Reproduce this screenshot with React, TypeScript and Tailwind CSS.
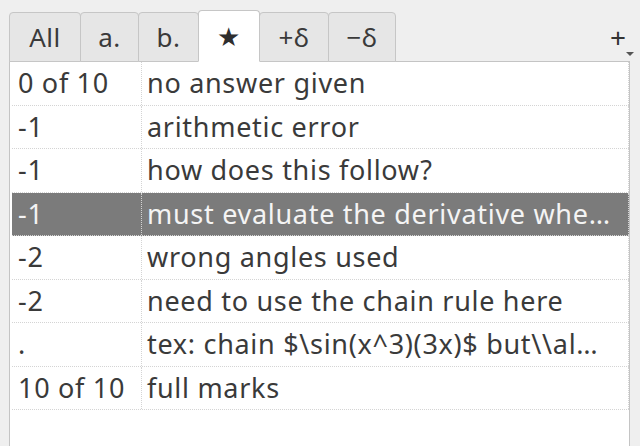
const TABS = ['All', 'a.', 'b.', '★', '+δ', '−δ'];
const TAB_W = ['w-[72px]', 'w-[59px]', 'w-[61px]', 'w-[62px]', 'w-[70px]', 'w-[68px]'];

// texts already clipped the way the list view shows them
const ROWS: Array<[string, string]> = [
  ['0 of 10', 'no answer given'],
  ['-1', 'arithmetic error'],
  ['-1', 'how does this follow?'],
  ['-1', 'must evaluate the derivative whe…'],
  ['-2', 'wrong angles used'],
  ['-2', 'need to use the chain rule here'],
  ['.', 'tex: chain $\\sin(x^3)(3x)$ but\\\\al…'],
  ['10 of 10', 'full marks'],
];

const SELECTED = 3;

export default function App() {
  return (
    <div
      className="w-[640px] h-[446px] overflow-hidden bg-[#efefef] text-[#3a3a3a]"
      style={{ fontFamily: '"Noto Sans", "Open Sans", sans-serif' }}
    >
      {/* tab strip */}
      <div className="flex items-end h-[62px] pl-[9px] pr-[10px]">
        {TABS.map((t, i) => {
          const active = i === 3;
          return (
            <div
              key={t}
              className={`${TAB_W[i]} flex items-center justify-center text-[26px] tracking-[0.5px] border border-[#c6c6c6] rounded-t-[4px] -mr-px ${
                active ? 'h-[52px] bg-white border-b-white relative z-10 text-[#2e2e2e]' : 'h-[50px] bg-[#e6e6e6]'
              }`}
            >
              {t === '★' ? <span className="text-[26px] leading-none">★</span> : t}
            </div>
          );
        })}
        <div className="flex-1" />
        <div className="relative h-[50px] w-[24px] flex items-center justify-center text-[28px] text-[#333]">
          +
          <span className="absolute right-[-4px] bottom-[6px] w-0 h-0 border-l-[4px] border-r-[4px] border-t-[4px] border-l-transparent border-r-transparent border-t-[#555]" />
        </div>
      </div>

      {/* table */}
      <div className="ml-[9px] w-[621px] h-[400px] bg-white border border-[#c4c4c4] -mt-px pl-[2px]">
        {ROWS.map(([score, text], i) => {
          const sel = i === SELECTED;
          return (
            <div
              key={i}
              className={`flex h-[43.5px] border-b border-dotted border-[#d4d4d4] text-[27px] tracking-[0.7px] ${
                sel ? 'bg-[#7b7b7b] text-[#f4f4f4]' : ''
              }`}
            >
              <div className="w-[130px] shrink-0 pl-[6px] flex items-center border-r border-dotted border-[#d4d4d4] whitespace-nowrap">
                {score}
              </div>
              <div className="flex-1 min-w-0 pl-[5px] flex items-center border-r border-dotted border-[#d4d4d4] whitespace-nowrap">
                {text}
              </div>
            </div>
          );
        })}
      </div>
    </div>
  );
}
